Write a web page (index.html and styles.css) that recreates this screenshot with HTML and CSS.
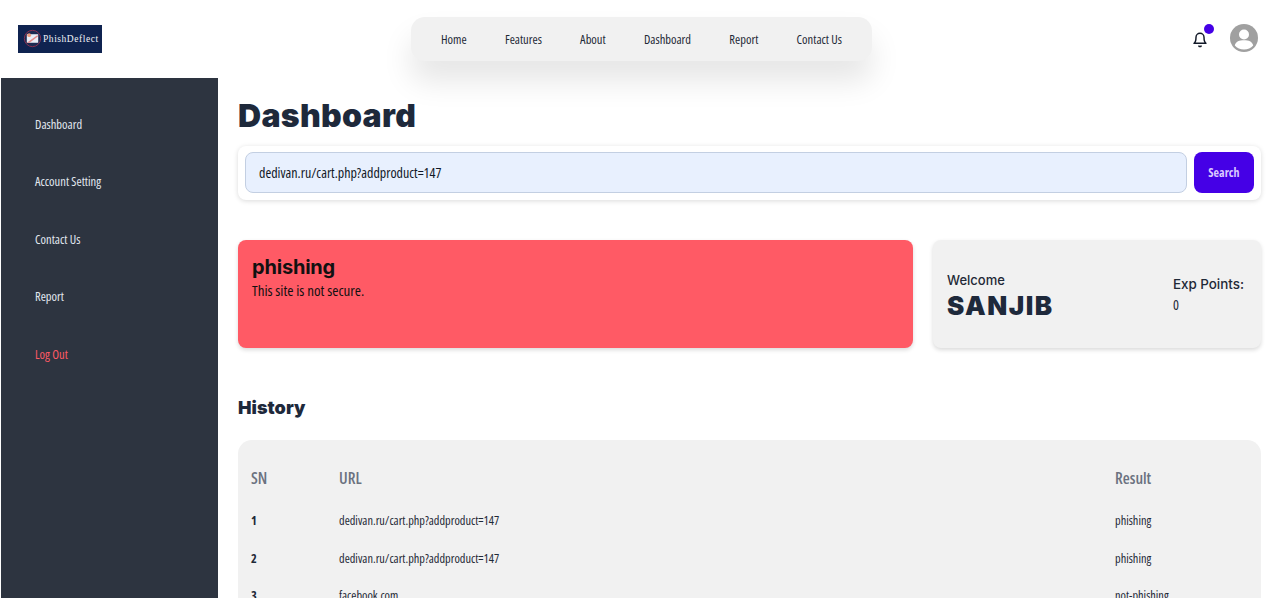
FILE: index.html
```html
<!DOCTYPE html>
<html lang="en">
<head>
    <meta charset="UTF-8">
    <meta name="viewport" content="width=device-width, initial-scale=1.0">
    <title>PhishDeflect Dashboard</title>
    <link rel="stylesheet" href="styles.css">
</head>
<body>
    <header class="topbar">
        <a class="logo" href="#">
            <svg class="logo-icon" viewBox="0 0 20 20">
                <circle cx="10" cy="10" r="8.6" fill="#1b2a52" stroke="#8e3050" stroke-width="1"/>
                <rect x="4" y="5.500" width="12" height="9" fill="#e9eef8"/>
                <circle cx="6.500" cy="6.500" r="2" fill="#ef9a7c"/>
                <path d="M4 14.500 L15 6.500 L16 7.500 L7 14.500 Z" fill="#e58b8b"/>
            </svg>
            <span>PhishDeflect</span>
        </a>
        <nav class="topnav">
            <a href="#">Home</a>
            <a href="#">Features</a>
            <a href="#">About</a>
            <a href="#">Dashboard</a>
            <a href="#">Report</a>
            <a href="#">Contact Us</a>
        </nav>
        <div class="top-icons">
            <div class="bell">
                <svg viewBox="0 0 24 24" width="16" height="16" fill="none" stroke="#111827" stroke-width="2.200" stroke-linecap="round" stroke-linejoin="round">
                    <path d="M18 8a6 6 0 0 0-12 0c0 7-3 9-3 9h18s-3-2-3-9"/>
                    <path d="M13.700 21a2 2 0 0 1-3.400 0"/>
                </svg>
                <span class="dot"></span>
            </div>
            <svg class="avatar" viewBox="0 0 28 28" width="28" height="28">
                <circle cx="14" cy="14" r="14" fill="#a0a0a0"/>
                <circle cx="14" cy="10.500" r="5" fill="#fff"/>
                <path d="M4.800 21.500c1-4 4.500-5.200 9.200-5.200s8.200 1.200 9.200 5.200c-2.200 2.600-5.500 4-9.200 4s-7-1.400-9.200-4z" fill="#fff"/>
            </svg>
        </div>
    </header>

    <div class="layout">
        <aside class="sidebar">
            <a href="#">Dashboard</a>
            <a href="#">Account Setting</a>
            <a href="#">Contact Us</a>
            <a href="#">Report</a>
            <a href="#" class="logout">Log Out</a>
        </aside>

        <main class="content">
            <h1>Dashboard</h1>

            <form class="search-card">
                <input type="text" class="search-input" value="dedivan.ru/cart.php?addproduct=147">
                <button type="button" class="search-btn">Search</button>
            </form>

            <div class="cards">
                <div class="result-card">
                    <h2>phishing</h2>
                    <p>This site is not secure.</p>
                </div>
                <div class="welcome-card">
                    <div class="welcome">
                        <p class="welcome-label">Welcome</p>
                        <p class="welcome-name">SANJIB</p>
                    </div>
                    <div class="points">
                        <p class="points-label">Exp Points:</p>
                        <p class="points-value">0</p>
                    </div>
                </div>
            </div>

            <h3>History</h3>

            <div class="history">
                <table>
                    <thead>
                        <tr>
                            <th class="col-sn">SN</th>
                            <th class="col-url">URL</th>
                            <th class="col-result">Result</th>
                        </tr>
                    </thead>
                    <tbody>
                        <tr>
                            <td class="sn">1</td>
                            <td>dedivan.ru/cart.php?addproduct=147</td>
                            <td>phishing</td>
                        </tr>
                        <tr>
                            <td class="sn">2</td>
                            <td>dedivan.ru/cart.php?addproduct=147</td>
                            <td>phishing</td>
                        </tr>
                        <tr>
                            <td class="sn">3</td>
                            <td>facebook.com</td>
                            <td>not-phishing</td>
                        </tr>
                    </tbody>
                </table>
            </div>
        </main>
    </div>
</body>
</html>
```

FILE: styles.css
```css
* {
    margin: 0;
    padding: 0;
    box-sizing: border-box;
}

html, body {
    height: 598px;
    overflow: hidden;
}

body {
    font-family: "Open Sans", "Liberation Sans", sans-serif;
    font-stretch: 75%;
    background: #fff;
    color: #111827;
}

a {
    text-decoration: none;
    color: inherit;
}

.topbar {
    height: 78px;
    display: flex;
    align-items: center;
    justify-content: space-between;
    padding: 0 18px;
    position: relative;
    z-index: 2;
}

.logo {
    width: 84px;
    height: 28px;
    background: #0f2350;
    color: #f1f3f8;
    display: flex;
    align-items: center;
    gap: 1px;
    padding-left: 5px;
    font-family: "Liberation Serif", serif;
    font-stretch: normal;
    font-size: 9.500px;
    letter-spacing: 0.550px;
    margin-top: -1px;
}

.logo-icon {
    width: 19px;
    height: 19px;
    flex: none;
}

.topnav {
    width: 461px;
    height: 44px;
    margin: -1px 0 0 -11px;
    background: #f1f1f1;
    border-radius: 14px;
    display: flex;
    align-items: center;
    justify-content: space-between;
    padding: 2px 30px 0;
    font-size: 12.500px;
    color: #1f2937;
    box-shadow: 0 20px 30px rgba(0, 0, 0, 0.1);
}

.top-icons {
    display: flex;
    align-items: center;
    gap: 22px;
    margin: -2px 4px 0 0;
}

.bell {
    position: relative;
    width: 16px;
    height: 16px;
    margin-top: 2px;
}

.dot {
    position: absolute;
    top: -7px;
    right: -6px;
    width: 10px;
    height: 10px;
    border-radius: 50%;
    background: #4500e6;
}

.layout {
    display: flex;
    height: 520px;
}

.sidebar {
    width: 217px;
    margin-left: 1px;
    background: #2d3440;
    padding: 17.600px 34px;
    display: flex;
    flex-direction: column;
    flex: none;
}

.sidebar a {
    height: 57.500px;
    line-height: 57.500px;
    font-size: 12.500px;
    color: #e2e8f0;
}

.sidebar .logout {
    color: #ff5a65;
}

.content {
    flex: 1;
    padding: 0 19px 0 20px;
}

h1 {
    font-family: "Inter", sans-serif;
    font-stretch: normal;
    font-weight: 900;
    font-size: 32px;
    letter-spacing: 0.300px;
    line-height: 36px;
    color: #1e293b;
    margin-top: 20px;
    height: 48px;
}

.search-card {
    height: 54px;
    display: flex;
    align-items: flex-start;
    gap: 7px;
    padding: 6px 7px;
    border-radius: 8px;
    background: #fff;
    box-shadow: 0 1px 5px rgba(0, 0, 0, 0.15);
}

.search-input {
    flex: 1;
    height: 41px;
    padding: 0 13px;
    border: 1px solid #c3cfe2;
    border-radius: 8px;
    background: #e8f0fe;
    font-family: inherit;
    font-stretch: inherit;
    font-size: 14px;
    color: #111827;
}

.search-btn {
    width: 60px;
    height: 41px;
    border: none;
    border-radius: 8px;
    background: #4500e6;
    color: #d9c8ff;
    font-family: inherit;
    font-stretch: inherit;
    font-size: 12px;
    font-weight: 700;
}

.cards {
    display: flex;
    gap: 20px;
    margin-top: 40px;
}

.result-card {
    width: 675px;
    height: 108px;
    padding: 14px 14px;
    border-radius: 8px;
    background: #ff5a65;
    box-shadow: 0 2px 4px rgba(0, 0, 0, 0.15);
    color: #111;
}

.result-card h2 {
    font-family: "Inter", sans-serif;
    font-stretch: normal;
    font-size: 20px;
    font-weight: 700;
    letter-spacing: -0.200px;
    line-height: 26px;
}

.result-card p {
    font-size: 15px;
    line-height: 21px;
}

.welcome-card {
    flex: 1;
    height: 108px;
    padding: 0 17px 0 14px;
    border-radius: 8px;
    background: #f1f1f1;
    box-shadow: 0 2px 4px rgba(0, 0, 0, 0.15);
    display: flex;
    align-items: center;
    justify-content: space-between;
}

.welcome {
    padding-top: 6px;
}

.welcome-label {
    font-family: "Inter", sans-serif;
    font-stretch: normal;
    font-size: 13px;
    font-weight: 500;
    line-height: 18px;
    color: #1f2937;
}

.welcome-name {
    font-family: "Inter", sans-serif;
    font-stretch: normal;
    font-size: 26px;
    font-weight: 900;
    line-height: 34px;
    letter-spacing: 1.500px;
    color: #1e293b;
}

.points {
    padding-top: 2px;
}

.points-label {
    font-family: "Inter", sans-serif;
    font-stretch: normal;
    font-size: 13.400px;
    font-weight: 500;
    line-height: 20px;
    color: #1f2937;
}

.points-value {
    font-size: 14px;
    line-height: 22px;
    color: #1f2937;
}

h3 {
    font-family: "Inter", sans-serif;
    font-stretch: normal;
    font-size: 18px;
    font-weight: 900;
    letter-spacing: 0.050px;
    line-height: 24px;
    color: #1e293b;
    margin-top: 48px;
}

.history {
    margin-top: 20px;
    background: #f1f1f1;
    border-radius: 14px;
    padding: 19px 13px;
    height: 200px;
}

table {
    width: 100%;
    border-collapse: collapse;
    table-layout: fixed;
    font-size: 12.300px;
    color: #1f2937;
}

th {
    height: 43px;
    padding-bottom: 6px;
    text-align: left;
    font-size: 16px;
    font-weight: 600;
    color: #6b7280;
}

td {
    height: 37.500px;
}

.col-sn {
    width: 88px;
}

.col-result {
    width: 133px;
}

.sn {
    font-weight: 700;
}
```
